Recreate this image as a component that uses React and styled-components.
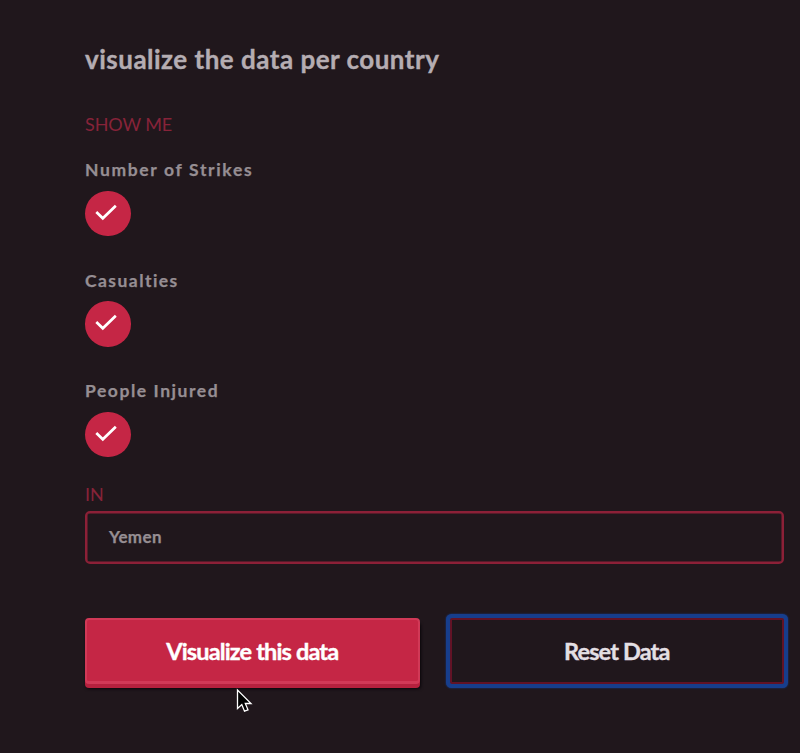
import React from "react";
import styled, { createGlobalStyle } from "styled-components";

const GlobalStyle = createGlobalStyle`
  * { box-sizing: border-box; }
  body {
    margin: 0;
    background: #20171c;
    font-family: Lato, "Liberation Sans", sans-serif;
  }
`;

const Page = styled.main`
  position: relative;
  min-height: 753px;
  overflow: hidden;
  padding: 43px 16px 0 85px;
  background: #20171c;
`;

const Title = styled.h1`
  margin: 0 0 38px;
  font-size: 26px;
  line-height: 32px;
  font-weight: 700;
  letter-spacing: 0.49px;
  -webkit-text-stroke: 0.35px;
  color: #b5adb2;
  white-space: nowrap;
`;

const Legend = styled.p`
  margin: 0;
  font-size: 18px;
  line-height: 22px;
  letter-spacing: -0.1px;
  color: #872339;
`;

const Options = styled.div`
  display: flex;
  flex-direction: column;
  gap: 34.5px;
  margin: 25px 0 25.5px;
`;

const Option = styled.label`
  display: flex;
  flex-direction: column;
  gap: 10.5px;
  align-items: flex-start;
`;

const OptionLabel = styled.span`
  font-size: 17.5px;
  line-height: 20px;
  font-weight: 700;
  letter-spacing: ${(p) => p.$spacing};
  -webkit-text-stroke: 0.25px;
  color: #968e93;
`;

const CheckCircle = styled.span`
  display: block;
  width: 45.5px;
  height: 45.5px;
  border-radius: 50%;
  background: #c52645;

  svg { display: block; width: 100%; height: 100%; }
`;

const CountryField = styled.div`
  height: 53px;
  margin-top: 6px;
  padding: 0 22px;
  border: 2px solid #8c2037;
  box-shadow: inset 0 0 0 0.5px #8c2037;
  border-radius: 5px;
  font-size: 17px;
  line-height: 48px;
  font-weight: 700;
  letter-spacing: 0.35px;
  -webkit-text-stroke: 0.25px;
  color: #968e93;
`;

const Actions = styled.div`
  display: grid;
  grid-template-columns: 1fr 1fr;
  gap: 30px;
  margin-top: 54.5px;
`;

const Button = styled.button`
  height: 66px;
  padding: 0;
  border: 2px solid #d13957;
  border-bottom-width: 3px;
  border-radius: 4px;
  background: #c52645;
  box-shadow: 0 4px 0 #b5213e, 1px 5px 3px #09060a;
  font: 700 23.5px/58px Lato, "Liberation Sans", sans-serif;
  letter-spacing: -0.85px;
  -webkit-text-stroke: 0.4px;
  color: #ffffff;
`;

const OutlineButton = styled(Button)`
  border: 2px solid #621326;
  border-radius: 2px;
  background: #20171c;
  color: #e3dfe3;
  box-shadow: 0 0 0 4px #173e8c, 0 0 2px 4px #173e8c;
`;

const Pointer = styled.svg`
  position: absolute;
  left: 236px;
  top: 687px;
  width: 17px;
  height: 27px;
`;

const options = [
  { label: "Number of Strikes", spacing: "1.65px" },
  { label: "Casualties", spacing: "1.45px" },
  { label: "People Injured", spacing: "1.55px" },
];

export default function App() {
  return (
    <Page>
      <GlobalStyle />
      <Title>visualize the data per country</Title>
      <Legend>SHOW ME</Legend>
      <Options>
        {options.map(({ label, spacing }) => (
          <Option key={label}>
            <OptionLabel $spacing={spacing}>{label}</OptionLabel>
            <CheckCircle>
              <svg viewBox="0 0 45.5 45.5" fill="none" stroke="#fff" strokeWidth="2.7">
                <path d="M11.3 21.1 L17.8 27.3 L30.8 14.8" />
              </svg>
            </CheckCircle>
          </Option>
        ))}
      </Options>
      <Legend>IN</Legend>
      <CountryField>Yemen</CountryField>
      <Actions>
        <Button type="button">Visualize this data</Button>
        <OutlineButton type="button">Reset Data</OutlineButton>
      </Actions>
      <Pointer viewBox="0 0 17 27" aria-hidden="true">
        <path
          d="M1.5 3 V21.5 L5.8 17.6 L8.5 24.2 L12 22.8 L9.3 16.5 H15 Z"
          fill="#000"
          stroke="#fff"
          strokeWidth="1.3"
        />
      </Pointer>
    </Page>
  );
}
